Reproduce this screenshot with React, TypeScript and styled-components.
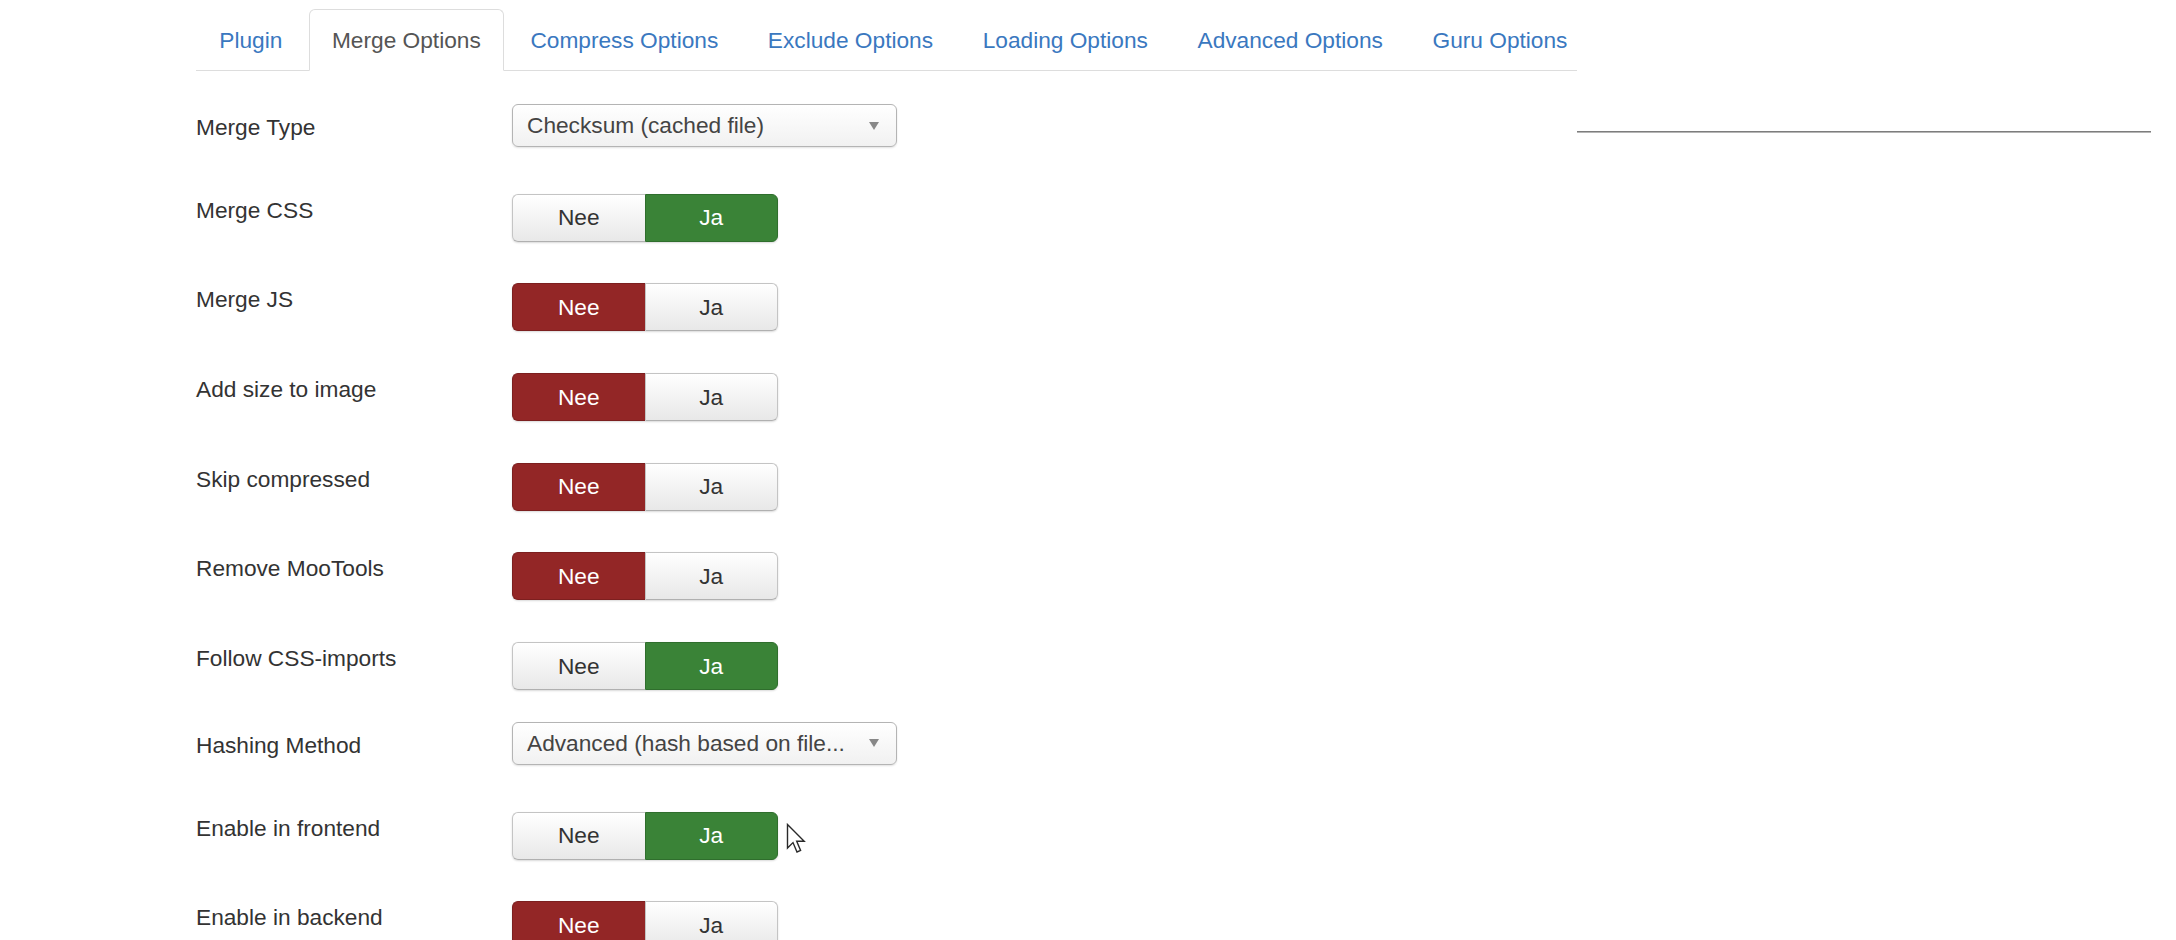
import React from "react"
import styled, { createGlobalStyle, css } from "styled-components"

const GlobalStyle = createGlobalStyle`
  html, body {
    margin: 0;
    padding: 0;
    background: #ffffff;
    overflow: hidden;
  }
  body {
    font-family: "Liberation Sans", Arial, Helvetica, sans-serif;
    font-size: 22.7px;
    color: #333333;
  }
`

type Value = "yes" | "no"

interface OptionRow {
  label: string
  kind: "select" | "toggle"
  value?: Value
  text?: string
  cursor?: boolean
}

const tabs = [
  "Plugin",
  "Merge Options",
  "Compress Options",
  "Exclude Options",
  "Loading Options",
  "Advanced Options",
  "Guru Options",
]

const rows: OptionRow[] = [
  { label: "Merge Type", kind: "select", text: "Checksum (cached file)" },
  { label: "Merge CSS", kind: "toggle", value: "yes" },
  { label: "Merge JS", kind: "toggle", value: "no" },
  { label: "Add size to image", kind: "toggle", value: "no" },
  { label: "Skip compressed", kind: "toggle", value: "no" },
  { label: "Remove MooTools", kind: "toggle", value: "no" },
  { label: "Follow CSS-imports", kind: "toggle", value: "yes" },
  { label: "Hashing Method", kind: "select", text: "Advanced (hash based on file..." },
  { label: "Enable in frontend", kind: "toggle", value: "yes", cursor: true },
  { label: "Enable in backend", kind: "toggle", value: "no" },
]

export default function App(){
  return(
    <Page>
      <GlobalStyle />
      <Main>
        <TabList>
          {tabs.map((t, i) => (
            <Tab key={t} $active={i === 1}>{t}</Tab>
          ))}
        </TabList>
        <Form>
          {rows.map(row => (
            <Row key={row.label}>
              <Label $select={row.kind === "select"}>{row.label}</Label>
              <Control>
                {row.kind === "select" ? (
                  <Select>
                    <span>{row.text}</span>
                    <Caret />
                  </Select>
                ) : (
                  <ToggleGroup>
                    <ToggleButton $on={row.value === "no"} $tone="no">Nee</ToggleButton>
                    <ToggleButton $on={row.value === "yes"} $tone="yes">Ja</ToggleButton>
                  </ToggleGroup>
                )}
                {row.cursor && (
                  <Cursor width="22" height="32" viewBox="0 0 22 32">
                    <path
                      d="M1.5 1.5 L1.5 25 L7 19.6 L11 29 L14.6 27.4 L10.7 18.2 L18.2 18.2 Z"
                      fill="#ffffff"
                      stroke="#2a2a2a"
                      strokeWidth="1.4"
                      strokeLinejoin="miter"
                    />
                  </Cursor>
                )}
              </Control>
            </Row>
          ))}
        </Form>
      </Main>
      <Aside>
        <Rule />
      </Aside>
    </Page>
  )
}

const Page = styled.div`
  display: flex;
  align-items: flex-start;
  padding-left: 196px;
`

const Main = styled.div`
  flex: 0 0 1381px;
  width: 1381px;
`

const TabList = styled.div`
  display: flex;
  gap: 3px;
  padding-top: 9px;
  border-bottom: 1px solid #dddddd;
`

interface activeProp{
  $active: boolean
}
const Tab = styled.div<activeProp>`
  height: 60px;
  line-height: 60px;
  padding: 0 22.3px;
  margin-bottom: -1px;
  border: 1px solid transparent;
  border-radius: 6px 6px 0 0;
  color: #3a78bf;
  white-space: nowrap;
  cursor: pointer;

  ${props => props.$active && css`
    color: #555555;
    background: #ffffff;
    border-color: #dddddd;
    border-bottom-color: #ffffff;
  `}
`

const Form = styled.div`
  padding-top: 43px;
`

const Row = styled.div`
  display: flex;
  align-items: flex-start;
  margin-bottom: 41.7px;
`

interface labelProps{
  $select: boolean
}
const Label = styled.label<labelProps>`
  flex: 0 0 316px;
  padding-top: ${props => props.$select ? "0" : "3px"};
  line-height: 26px;
  color: #333333;
`

const Control = styled.div`
  position: relative;
  display: flex;
`

const Select = styled.div`
  box-sizing: border-box;
  display: flex;
  align-items: center;
  justify-content: space-between;
  width: 385px;
  height: 43px;
  margin: -10px 0 5px;
  padding: 0 14px 0 14px;
  border: 1px solid #b4b4b4;
  border-radius: 6px;
  background: linear-gradient(#ffffff, #f1f1f1);
  box-shadow: 0 1px 2px rgba(0, 0, 0, 0.12);
  color: #444444;
  white-space: nowrap;
`

const Caret = styled.span`
  width: 0;
  height: 0;
  margin-right: 3px;
  border-left: 5px solid transparent;
  border-right: 5px solid transparent;
  border-top: 8px solid #888888;
`

const ToggleGroup = styled.div`
  display: flex;
  width: 266px;
  height: 48px;
  border-radius: 6px;
  box-shadow: 0 1px 2px rgba(0, 0, 0, 0.15);
`

interface toggleProps{
  $on: boolean
  $tone: Value
}
const ToggleButton = styled.div<toggleProps>`
  box-sizing: border-box;
  flex: 1;
  display: flex;
  align-items: center;
  justify-content: center;
  border: 1px solid #c4c4c4;
  border-bottom-color: #b0b0b0;
  background: linear-gradient(#ffffff, #e8e8e8);
  color: #333333;

  &:first-child{
    border-radius: 6px 0 0 6px;
    border-right: none;
  }
  &:last-child{
    border-radius: 0 6px 6px 0;
  }

  ${props => props.$on && props.$tone === "yes" && css`
    background: #3a8337;
    border-color: #2f6e2d;
    color: #ffffff;
  `}
  ${props => props.$on && props.$tone === "no" && css`
    background: #932626;
    border-color: #7c1f1f;
    color: #ffffff;
  `}
`

const Cursor = styled.svg`
  position: absolute;
  left: 274px;
  top: 11px;
`

const Aside = styled.div`
  flex: 0 0 574px;
  padding-top: 131px;
`

const Rule = styled.div`
  height: 2px;
  background: linear-gradient(#7d7d7d 50%, #b5b5b5 50%);
`
